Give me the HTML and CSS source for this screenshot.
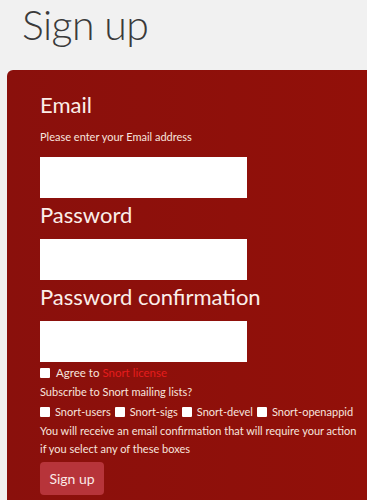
FILE: index.html
```html
<!DOCTYPE html>
<html>
<head>
<meta charset="utf-8">
<link rel="stylesheet" href="styles.css">
</head>
<body>
<h1 class="page-title">Sign up</h1>
<form class="panel">
  <label class="field-label first">Email</label>
  <p class="hint">Please enter your Email address</p>
  <input class="text-input" type="text">
  <label class="field-label">Password</label>
  <input class="text-input" type="password">
  <label class="field-label">Password confirmation</label>
  <input class="text-input" type="password">
  <div class="check-row agree"><span class="box"></span><span>Agree to <a class="license" href="#">Snort license</a></span></div>
  <p class="line">Subscribe to Snort mailing lists?</p>
  <div class="check-row lists">
    <span class="box"></span><span class="opt">Snort-users</span>
    <span class="box"></span><span class="opt">Snort-sigs</span>
    <span class="box"></span><span class="opt">Snort-devel</span>
    <span class="box"></span><span class="opt">Snort-openappid</span>
  </div>
  <p class="line notice">You will receive an email confirmation that will require your action if you select any of these boxes</p>
  <button class="submit" type="button">Sign up</button>
</form>
</body>
</html>
```

FILE: styles.css
```css
html, body {
  margin: 0;
  padding: 0;
  background: #f1f1f1;
  overflow: hidden;
  font-family: "Lato", "DejaVu Sans", sans-serif;
}
.page-title {
  margin: 0;
  padding: 0 0 0 22px;
  height: 70px;
  line-height: 50px;
  font-size: 41px;
  font-weight: 300;
  color: #3a3a3a;
  letter-spacing: -0.6px;
}
.panel {
  margin-left: 7px;
  padding: 20px 10px 4px 33px;
  border-radius: 6px 0 0 0;
  background: linear-gradient(90deg, #8a100c 0%, #921009 100%);
  color: #f7e4de;
  display: flex;
  flex-direction: column;
  align-items: flex-start;
  min-height: 430px;
  box-sizing: border-box;
}
.panel > * { flex-shrink: 0; }
.field-label {
  font-size: 22px;
  line-height: 30px;
  font-weight: 400;
  color: #fbeee9;
  margin: 2px 0 9px;
}
.field-label.first { margin: 0; }
.hint {
  margin: 8px 0 11px;
  font-size: 11px;
  line-height: 18px;
}
.text-input {
  width: 207px;
  height: 41px;
  box-sizing: border-box;
  border: none;
  background: #fff;
  margin: 0;
}
.check-row {
  display: flex;
  align-items: center;
  font-size: 11.5px;
  line-height: 18px;
  white-space: nowrap;
}
.agree { margin-top: 2px; gap: 6px; }
.box {
  width: 10px;
  height: 10px;
  background: #fff;
  border-radius: 1px;
  display: inline-block;
  flex-shrink: 0;
}
.lists { margin-top: 2px; font-size: 11px; }
.lists .box { margin-right: 5px; }
.lists .opt { margin-right: 4px; }
.license { color: #e51d1d; text-decoration: none; }
.line {
  margin: 1px 0 0;
  font-size: 11px;
  line-height: 18px;
}
.notice { margin-top: 1px; }
.submit {
  margin-top: 4px;
  width: 64px;
  height: 33px;
  border: none;
  border-radius: 4px;
  background: #b7343a;
  color: #fbe9e7;
  font-family: inherit;
  font-size: 14px;
}
```
